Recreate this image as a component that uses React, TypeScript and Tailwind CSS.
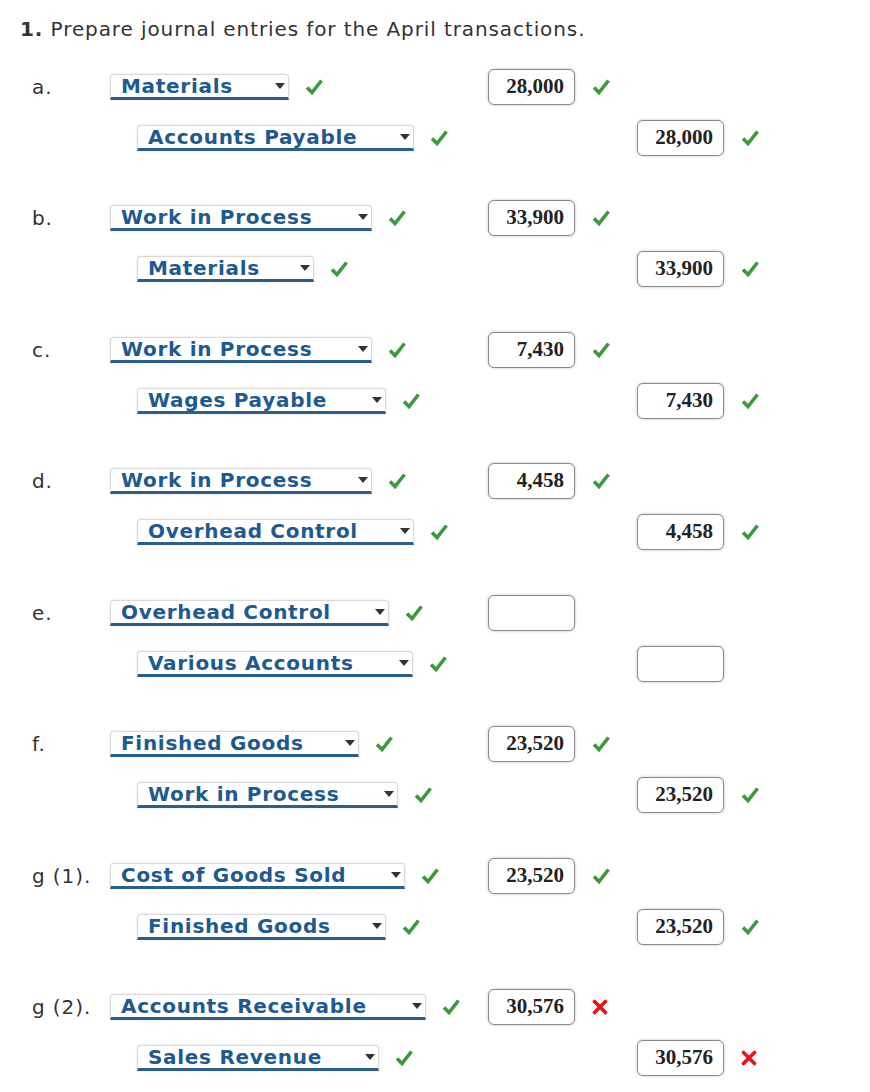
import React from "react";

type Line = { account: string; width: number; amount: string; status: "ok" | "bad" };
type Entry = { label: string; debit: Line; credit: Line };

const entries: Entry[] = [
  {
    label: "a.",
    debit: { account: "Materials", width: 179, amount: "28,000", status: "ok" },
    credit: { account: "Accounts Payable", width: 277, amount: "28,000", status: "ok" },
  },
  {
    label: "b.",
    debit: { account: "Work in Process", width: 262, amount: "33,900", status: "ok" },
    credit: { account: "Materials", width: 177, amount: "33,900", status: "ok" },
  },
  {
    label: "c.",
    debit: { account: "Work in Process", width: 262, amount: "7,430", status: "ok" },
    credit: { account: "Wages Payable", width: 249, amount: "7,430", status: "ok" },
  },
  {
    label: "d.",
    debit: { account: "Work in Process", width: 262, amount: "4,458", status: "ok" },
    credit: { account: "Overhead Control", width: 277, amount: "4,458", status: "ok" },
  },
  {
    label: "e.",
    debit: { account: "Overhead Control", width: 279, amount: "", status: "ok" },
    credit: { account: "Various Accounts", width: 276, amount: "", status: "ok" },
  },
  {
    label: "f.",
    debit: { account: "Finished Goods", width: 249, amount: "23,520", status: "ok" },
    credit: { account: "Work in Process", width: 261, amount: "23,520", status: "ok" },
  },
  {
    label: "g (1).",
    debit: { account: "Cost of Goods Sold", width: 295, amount: "23,520", status: "ok" },
    credit: { account: "Finished Goods", width: 249, amount: "23,520", status: "ok" },
  },
  {
    label: "g (2).",
    debit: { account: "Accounts Receivable", width: 316, amount: "30,576", status: "bad" },
    credit: { account: "Sales Revenue", width: 242, amount: "30,576", status: "bad" },
  },
];

function Check() {
  return (
    <svg width="18" height="18" viewBox="0 0 18 18" className="shrink-0">
      <path d="M2 9.5 L7 14.5 L16.5 2.5" fill="none" stroke="#3a9a3c" strokeWidth="3.6" strokeLinejoin="miter" />
    </svg>
  );
}

function Cross() {
  return (
    <svg width="16" height="16" viewBox="0 0 16 16" className="shrink-0">
      <path d="M2.5 2.5 L13.5 13.5 M13.5 2.5 L2.5 13.5" stroke="#e8131b" strokeWidth="3.6" strokeLinecap="round" />
    </svg>
  );
}

function Mark({ status }: { status: "ok" | "bad" }) {
  return status === "ok" ? <Check /> : <Cross />;
}

function AccountSelect({ text, width }: { text: string; width: number }) {
  return (
    <div
      className="flex h-[26px] items-center justify-between rounded-t-[4px] border border-b-[3px] border-[#d9d9d9] border-b-[#2c5e8c] bg-white pl-[10px] pr-[3px] shadow-[0_0_2px_rgba(0,0,0,0.15)]"
      style={{ width }}
    >
      <span className="text-[20px] font-bold leading-none tracking-[0.7px] text-[#1d5a90] font-['DejaVu_Sans',sans-serif] whitespace-nowrap">
        {text}
      </span>
      <svg width="10" height="6" viewBox="0 0 10 6" className="shrink-0">
        <path d="M0 0 H10 L5 6 Z" fill="#333" />
      </svg>
    </div>
  );
}

function AmountBox({ value }: { value: string }) {
  return (
    <div className="flex h-[36px] w-[87px] items-center justify-end rounded-[6px] border border-[#8a8a8a] bg-white pr-[10px] shadow-[0_0_3px_rgba(0,0,0,0.25)]">
      <span className="text-[21px] font-bold text-[#222] font-['Liberation_Serif',serif]">{value}</span>
    </div>
  );
}

function Row({ label, line, credit }: { label: string; line: Line; credit: boolean }) {
  return (
    <div className="flex h-[51px] items-center">
      <div className="w-[78px] text-[20px] tracking-[0.9px] text-[#333] font-['DejaVu_Sans',sans-serif]">{label}</div>
      <div className={`flex w-[378px] items-center gap-[16px] ${credit ? "pl-[27px]" : ""}`}>
        <AccountSelect text={line.account} width={line.width} />
        <Check />
      </div>
      {credit ? (
        <div className="w-[149px]" />
      ) : (
        <div className="flex w-[149px] items-center gap-[17px]">
          <AmountBox value={line.amount} />
          {line.amount && <Mark status={line.status} />}
        </div>
      )}
      {credit && (
        <div className="flex items-center gap-[17px]">
          <AmountBox value={line.amount} />
          {line.amount && <Mark status={line.status} />}
        </div>
      )}
    </div>
  );
}

export default function App() {
  return (
    <div className="min-h-[1092px] w-[870px] bg-white pt-[15px] font-['DejaVu_Sans',sans-serif]">
      <h1 className="h-[28px] pl-[20px] text-[20px] leading-[28px] tracking-[0.9px] text-[#333]">
        <span className="font-bold">1.</span> Prepare journal entries for the April transactions.
      </h1>
      <div className="mt-[18px] pl-[32px]">
        {entries.map((e, i) => (
          <div key={i} className={i > 0 ? "mt-[29.5px]" : ""}>
            <Row label={e.label} line={e.debit} credit={false} />
            <Row label="" line={e.credit} credit />
          </div>
        ))}
      </div>
    </div>
  );
}
